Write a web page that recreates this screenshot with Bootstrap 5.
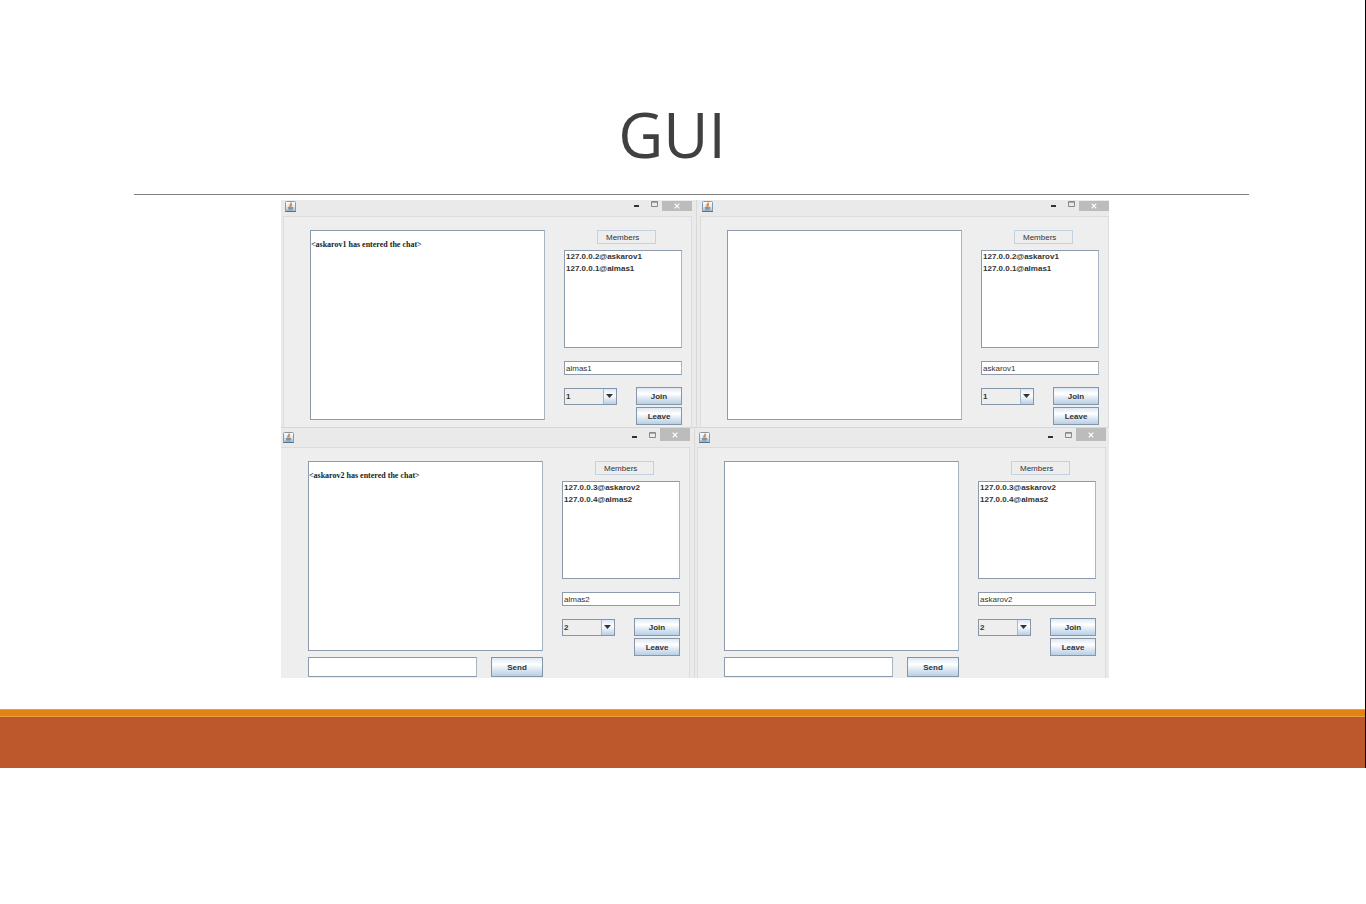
<!DOCTYPE html>
<html lang="en">
<head>
<meta charset="utf-8">
<meta name="viewport" content="width=device-width, initial-scale=1">
<title>GUI</title>
<link href="https://cdn.jsdelivr.net/npm/bootstrap@5.3.0/dist/css/bootstrap.min.css" rel="stylesheet">
<style>
body{background:#fff;font-family:"Liberation Sans",Arial,sans-serif}
.slide{border-right:1px solid #000}
.slide-head{margin:0 116px 0 134px;padding:93px 39px 19px 0;border-bottom:1px solid #7f7f7f}
.slide-head h1{font:400 62px/82px "Open Sans",sans-serif;color:#404040}
.slide-body{margin:0 116px 0 134px;padding:5px 0 31px}
.shots{max-width:835px;padding-left:7px}
.shots .pair{background:#eaeaea}
.win{flex:1 1 0;min-width:0}
.win.wide{flex-basis:2px}
.win+.win{border-left:1px solid #d9d9d9}
.pair-top .win:first-child{padding:0 4px 0 2px}
.pair-top .win:last-child{padding-left:3px}
.pair-low .win:first-child{padding-right:4px}
.pair-low .win:last-child{padding:0 3px 0 2px}
.pair-low{border-top:1px solid #d6d6d6}
.bar{height:16px;padding:1px 0 0 2px}
.pair-low .bar{height:19px;padding-top:4px}
.bar svg{display:block}
.ctl{border:0;padding:0;background:none;line-height:0}
.ctl-close{width:30px;height:10px;background:#bcbcbc;margin-left:4px}
.pair-low .ctl-close{height:13px;margin-top:-4px}
.ctl-min{margin-right:12px}
.client{background:#eee;border:1px solid #dcdcdc;border-bottom:0;padding:13px 9px 0 26px}
.pair-low .win:first-child .client{border-left-color:#eee}
.pair-top .client{height:211px;overflow:hidden}
.pair-low .client{height:231px;overflow:hidden}
.log,.names,.line{display:block;background:#fff;border:1px solid #8b9bab;border-right-color:#a8b5c2;border-radius:0}
.log{width:100%;height:190px;resize:none;padding:9px 0 0 0;font:bold 8px/10px "Liberation Serif","Times New Roman",serif;color:#222;overflow:hidden}
.left{flex:1 1 0;min-width:0}
.right{width:118px;margin-left:19px}
.tag{width:59px;height:14px;margin-left:33px;margin-bottom:6px;border:1px solid #c3d2e1;font-size:8px;line-height:13px;color:#333;padding-left:8px}
.names{height:98px;margin:0 0 13px;padding:0 1px;font-weight:bold;font-size:8px;line-height:12px;color:#333}
.line{height:14px;width:100%;padding:0 1px;font-size:8px;line-height:12px;color:#333}
.tools{margin-top:12px}
.pick{width:53px;height:17px;margin-top:1px;border:1px solid #8496a8;border-radius:0;appearance:none;font-size:8px;font-weight:bold;line-height:15px;color:#333;padding:0 0 0 1px;
background:url("data:image/svg+xml,%3Csvg xmlns='http://www.w3.org/2000/svg' width='13' height='15'%3E%3Cpath d='M3 5h7L6.500 9z' fill='%23333'/%3E%3C/svg%3E") right/13px 15px no-repeat,linear-gradient(90deg,#eee 38px,#a5b8cc 38px 39px,transparent 39px),linear-gradient(#dde8f3,#fff 40%,#b8cfe5)}
.push{display:block;width:46px;height:18px;padding:0;border:1px solid #8496a8;background:linear-gradient(#dde8f3,#fff 35%,#dce7f2 65%,#b8cfe5);font-size:8px;font-weight:bold;line-height:15px;color:#333}
.stack{gap:2px}
.entry{margin-top:6px}
.entry .line{width:169px;height:20px}
.entry .push{width:52px;height:20px}
.foot-a{height:8px;background:#e48312;border-top:1px solid #eb9a45;border-bottom:1px solid #e9a04a}
.foot-b{height:51px;background:#bd582c}
</style>
</head>
<body>
<svg width="0" height="0" class="position-absolute" aria-hidden="true">
<defs><linearGradient id="jg" x2="0" y2="1"><stop stop-color="#fdfdfd"/><stop offset=".55" stop-color="#e3e9ee"/><stop offset="1" stop-color="#9fb4c6"/></linearGradient></defs>
<symbol id="java" viewBox="0 0 11 11">
<rect x=".5" y=".5" width="10" height="10" rx="1" fill="url(#jg)" stroke="#8299ad"/>
<path d="M0 10.500h11" stroke="#57748e"/>
<path d="M6.300 1.500C6.500 3 3.800 3.500 5.200 5.800M7 3.300C5.500 4 5.800 4.500 6.200 5.500" fill="none" stroke="#e58a3c" stroke-width="1.400"/>
<path d="M3 6.300h4.300c-.1 1.300-.7 1.800-1.300 1.800H4.300C3.600 8 3.200 7.300 3 6.300zM7.300 6.400c1.500-.2 1.200 1.200-.2 1.300M2.500 9h5.500" fill="#7b95ab" stroke="#6a87a0" stroke-width=".6"/>
</symbol>
<symbol id="mn" viewBox="0 0 5 7"><path d="M0 4h5v2H0z" fill="#333"/></symbol>
<symbol id="mx" viewBox="0 0 7 6"><path d="M.5.500h6v5h-6zM.5 1.200h6" fill="none" stroke="#888"/></symbol>
<symbol id="cl" viewBox="0 0 6 6"><path d="M.7.700l4.600 4.600M5.300.700L.7 5.300" stroke="#fff" stroke-width="1.200"/></symbol>
</svg>
<main class="slide">
<header class="slide-head text-center"><h1 class="m-0">GUI</h1></header>
<div class="slide-body"><div class="shots mx-auto">

<div class="pair pair-top d-flex">
<section class="win wide">
<div class="bar d-flex align-items-start"><svg class="me-auto" width="11" height="11"><use href="#java"/></svg>
<button class="ctl ctl-min" aria-label="Minimize"><svg width="5" height="7"><use href="#mn"/></svg></button><button class="ctl" aria-label="Maximize"><svg width="7" height="6"><use href="#mx"/></svg></button><button class="ctl ctl-close d-flex align-items-center justify-content-center" aria-label="Close"><svg width="6" height="6"><use href="#cl"/></svg></button></div>
<div class="client d-flex">
<div class="left"><textarea class="log" readonly aria-label="Chat">&lt;askarov1 has entered the chat&gt;</textarea></div>
<div class="right"><div class="tag">Members</div><ul class="names list-unstyled"><li>127.0.0.2@askarov1</li><li>127.0.0.1@almas1</li></ul>
<input class="line" aria-label="Name" value="almas1">
<div class="tools d-flex justify-content-between align-items-start"><select class="pick" aria-label="Room"><option>1</option></select><div class="stack d-grid"><button class="push">Join</button><button class="push">Leave</button></div></div></div>
</div></section>
<section class="win">
<div class="bar d-flex align-items-start"><svg class="me-auto" width="11" height="11"><use href="#java"/></svg>
<button class="ctl ctl-min" aria-label="Minimize"><svg width="5" height="7"><use href="#mn"/></svg></button><button class="ctl" aria-label="Maximize"><svg width="7" height="6"><use href="#mx"/></svg></button><button class="ctl ctl-close d-flex align-items-center justify-content-center" aria-label="Close"><svg width="6" height="6"><use href="#cl"/></svg></button></div>
<div class="client d-flex">
<div class="left"><textarea class="log" readonly aria-label="Chat"></textarea></div>
<div class="right"><div class="tag">Members</div><ul class="names list-unstyled"><li>127.0.0.2@askarov1</li><li>127.0.0.1@almas1</li></ul>
<input class="line" aria-label="Name" value="askarov1">
<div class="tools d-flex justify-content-between align-items-start"><select class="pick" aria-label="Room"><option>1</option></select><div class="stack d-grid"><button class="push">Join</button><button class="push">Leave</button></div></div></div>
</div></section>
</div>

<div class="pair pair-low d-flex">
<section class="win">
<div class="bar d-flex align-items-start"><svg class="me-auto" width="11" height="11"><use href="#java"/></svg>
<button class="ctl ctl-min" aria-label="Minimize"><svg width="5" height="7"><use href="#mn"/></svg></button><button class="ctl" aria-label="Maximize"><svg width="7" height="6"><use href="#mx"/></svg></button><button class="ctl ctl-close d-flex align-items-center justify-content-center" aria-label="Close"><svg width="6" height="6"><use href="#cl"/></svg></button></div>
<div class="client d-flex">
<div class="left"><textarea class="log" readonly aria-label="Chat">&lt;askarov2 has entered the chat&gt;</textarea>
<div class="entry d-flex justify-content-between"><input class="line" aria-label="Message"><button class="push">Send</button></div></div>
<div class="right"><div class="tag">Members</div><ul class="names list-unstyled"><li>127.0.0.3@askarov2</li><li>127.0.0.4@almas2</li></ul>
<input class="line" aria-label="Name" value="almas2">
<div class="tools d-flex justify-content-between align-items-start"><select class="pick" aria-label="Room"><option>2</option></select><div class="stack d-grid"><button class="push">Join</button><button class="push">Leave</button></div></div></div>
</div></section>
<section class="win wide">
<div class="bar d-flex align-items-start"><svg class="me-auto" width="11" height="11"><use href="#java"/></svg>
<button class="ctl ctl-min" aria-label="Minimize"><svg width="5" height="7"><use href="#mn"/></svg></button><button class="ctl" aria-label="Maximize"><svg width="7" height="6"><use href="#mx"/></svg></button><button class="ctl ctl-close d-flex align-items-center justify-content-center" aria-label="Close"><svg width="6" height="6"><use href="#cl"/></svg></button></div>
<div class="client d-flex">
<div class="left"><textarea class="log" readonly aria-label="Chat"></textarea>
<div class="entry d-flex justify-content-between"><input class="line" aria-label="Message"><button class="push">Send</button></div></div>
<div class="right"><div class="tag">Members</div><ul class="names list-unstyled"><li>127.0.0.3@askarov2</li><li>127.0.0.4@almas2</li></ul>
<input class="line" aria-label="Name" value="askarov2">
<div class="tools d-flex justify-content-between align-items-start"><select class="pick" aria-label="Room"><option>2</option></select><div class="stack d-grid"><button class="push">Join</button><button class="push">Leave</button></div></div></div>
</div></section>
</div>

</div></div>
<div class="foot-a"></div><div class="foot-b"></div>
</main>
<script src="https://cdn.jsdelivr.net/npm/bootstrap@5.3.0/dist/js/bootstrap.bundle.min.js"></script>
</body>
</html>
